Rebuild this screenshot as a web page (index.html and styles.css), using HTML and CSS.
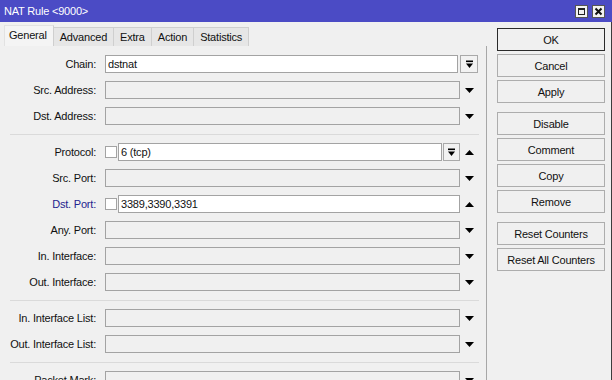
FILE: index.html
```html
<!DOCTYPE html>
<html>
<head>
  <meta charset="utf-8">
  <title>NAT Rule &lt;9000&gt;</title>
  <link rel="stylesheet" href="styles.css">
</head>
<body>

<div class="window">
  <div class="titlebar">
    <span class="title">NAT Rule &lt;9000&gt;</span>
    <div class="wbtns">
      <span class="wbtn">
        <svg width="13" height="13" viewBox="0 0 13 13">
          <rect x="0.5" y="0.5" width="12" height="12" fill="#f2f2f2" stroke="#555"/>
          <rect x="3.5" y="3.5" width="6" height="6" fill="none" stroke="#222"/>
          <rect x="3" y="3" width="7" height="2" fill="#222"/>
        </svg>
      </span>
      <span class="wbtn">
        <svg width="13" height="13" viewBox="0 0 13 13">
          <rect x="0.5" y="0.5" width="12" height="12" fill="#f2f2f2" stroke="#555"/>
          <path d="M3.5 3.5 L9.5 9.5 M9.5 3.5 L3.5 9.5" stroke="#111" stroke-width="2"/>
        </svg>
      </span>
    </div>
  </div>

  <div class="body">
    <div class="main">
      <div class="tabs">
        <span class="tab active">General</span>
        <span class="tab">Advanced</span>
        <span class="tab">Extra</span>
        <span class="tab">Action</span>
        <span class="tab">Statistics</span>
      </div>

      <div class="panel">
        <!-- section 1 -->
        <div class="section">
          <div class="row">
            <span class="label">Chain:</span>
            <div class="field"><span class="box on short">dstnat</span></div>
            <span class="dd"><svg width="9" height="9" viewBox="0 0 9 9"><rect x="1" y="0.5" width="7" height="1.6" fill="#000"/><polygon points="1,3.5 8,3.5 4.5,8" fill="#000"/></svg></span>
          </div>
          <div class="row">
            <span class="label">Src. Address:</span>
            <div class="field"><span class="box"></span></div>
            <span class="arrow"><svg width="9" height="5" viewBox="0 0 9 5"><polygon points="0,0 9,0 4.5,5" fill="#000"/></svg></span>
          </div>
          <div class="row">
            <span class="label">Dst. Address:</span>
            <div class="field"><span class="box"></span></div>
            <span class="arrow"><svg width="9" height="5" viewBox="0 0 9 5"><polygon points="0,0 9,0 4.5,5" fill="#000"/></svg></span>
          </div>
        </div>

        <div class="sep"></div>

        <!-- section 2 -->
        <div class="section">
          <div class="row">
            <span class="label">Protocol:</span>
            <div class="field">
              <span class="check"></span>
              <span class="box on">6 (tcp)</span>
              <span class="dd inline"><svg width="9" height="9" viewBox="0 0 9 9"><rect x="1" y="0.5" width="7" height="1.6" fill="#000"/><polygon points="1,3.5 8,3.5 4.5,8" fill="#000"/></svg></span>
            </div>
            <span class="arrow"><svg width="9" height="5" viewBox="0 0 9 5"><polygon points="0,5 9,5 4.5,0" fill="#000"/></svg></span>
          </div>
          <div class="row">
            <span class="label">Src. Port:</span>
            <div class="field"><span class="box"></span></div>
            <span class="arrow"><svg width="9" height="5" viewBox="0 0 9 5"><polygon points="0,0 9,0 4.5,5" fill="#000"/></svg></span>
          </div>
          <div class="row">
            <span class="label blue">Dst. Port:</span>
            <div class="field">
              <span class="check"></span>
              <span class="box on">3389,3390,3391</span>
            </div>
            <span class="arrow"><svg width="9" height="5" viewBox="0 0 9 5"><polygon points="0,5 9,5 4.5,0" fill="#000"/></svg></span>
          </div>
          <div class="row">
            <span class="label">Any. Port:</span>
            <div class="field"><span class="box"></span></div>
            <span class="arrow"><svg width="9" height="5" viewBox="0 0 9 5"><polygon points="0,0 9,0 4.5,5" fill="#000"/></svg></span>
          </div>
          <div class="row">
            <span class="label">In. Interface:</span>
            <div class="field"><span class="box"></span></div>
            <span class="arrow"><svg width="9" height="5" viewBox="0 0 9 5"><polygon points="0,0 9,0 4.5,5" fill="#000"/></svg></span>
          </div>
          <div class="row">
            <span class="label">Out. Interface:</span>
            <div class="field"><span class="box"></span></div>
            <span class="arrow"><svg width="9" height="5" viewBox="0 0 9 5"><polygon points="0,0 9,0 4.5,5" fill="#000"/></svg></span>
          </div>
        </div>

        <div class="sep"></div>

        <!-- section 3 -->
        <div class="section">
          <div class="row">
            <span class="label">In. Interface List:</span>
            <div class="field"><span class="box"></span></div>
            <span class="arrow"><svg width="9" height="5" viewBox="0 0 9 5"><polygon points="0,0 9,0 4.5,5" fill="#000"/></svg></span>
          </div>
          <div class="row">
            <span class="label">Out. Interface List:</span>
            <div class="field"><span class="box"></span></div>
            <span class="arrow"><svg width="9" height="5" viewBox="0 0 9 5"><polygon points="0,0 9,0 4.5,5" fill="#000"/></svg></span>
          </div>
        </div>

        <div class="sep"></div>

        <!-- section 4 -->
        <div class="section">
          <div class="row">
            <span class="label">Packet Mark:</span>
            <div class="field"><span class="box"></span></div>
            <span class="arrow"><svg width="9" height="5" viewBox="0 0 9 5"><polygon points="0,0 9,0 4.5,5" fill="#000"/></svg></span>
          </div>
        </div>
      </div>
    </div>

    <div class="side">
      <div class="group">
        <button class="btn default">OK</button>
        <button class="btn">Cancel</button>
        <button class="btn">Apply</button>
      </div>
      <div class="group">
        <button class="btn">Disable</button>
        <button class="btn">Comment</button>
        <button class="btn">Copy</button>
        <button class="btn">Remove</button>
      </div>
      <div class="group">
        <button class="btn">Reset Counters</button>
        <button class="btn">Reset All Counters</button>
      </div>
    </div>
  </div>
</div>

</body>
</html>
```

FILE: styles.css
```css
body {
  margin: 0;
  font-family: "Liberation Sans", Arial, sans-serif;
  font-size: 11px;
  letter-spacing: -0.2px;
  color: #111;
  background: #f0f0f0;
}
.window {
  width: 612px;
  height: 380px;
  overflow: hidden;
  background: #f0f0f0;
}
.titlebar {
  height: 22px;
  background: #4b4bc5;
  display: flex;
  align-items: center;
  justify-content: space-between;
  padding: 0 7px 0 4px;
  box-sizing: border-box;
}
.title {
  color: #fff;
  font-size: 11px;
}
.wbtns {
  display: flex;
  gap: 4px;
}
.wbtn {
  display: block;
  width: 13px;
  height: 13px;
}
.wbtn svg {
  display: block;
}

.body {
  display: flex;
  height: 358px;
  border-right: 1px solid #3c3c3c;
  width: 611px;
}
.main {
  width: 487px;
  display: flex;
  flex-direction: column;
  min-height: 0;
}
.tabs {
  display: flex;
  flex-shrink: 0;
  align-items: flex-end;
  height: 24px;
  padding-left: 4px;
}
.tab {
  height: 19px;
  line-height: 18px;
  padding: 0 6px;
  box-sizing: border-box;
  border: 1px solid #cfcfcf;
  border-bottom: none;
  border-left: none;
  background: #e6e6e6;
}
.tab.active {
  height: 21px;
  line-height: 19px;
  padding: 0 6px 0 4px;
  background: #f4f4f4;
  border-left: 1px solid #e2e2e2;
  border-top-color: #e2e2e2;
}
.panel {
  flex: 1;
  min-height: 0;
  overflow: hidden;
  border-right: 1px solid #a7a7a7;
  padding-top: 9px;
}
.section {
  display: flex;
  flex-direction: column;
  gap: 8px;
}
.row {
  display: flex;
  flex-shrink: 0;
  align-items: center;
  height: 18px;
}
.label {
  width: 96px;
  margin-right: 9px;
  text-align: right;
  white-space: nowrap;
}
.label.blue {
  color: #23238f;
}
.field {
  width: 355px;
  height: 18px;
  display: flex;
  align-items: center;
}
.box {
  flex: 1;
  height: 18px;
  box-sizing: border-box;
  border: 1px solid #a3a3a3;
  background: #f0f0f0;
  padding-left: 2px;
  line-height: 16px;
  color: #111;
}
.box.on {
  background: #fff;
}
.box.short {
  margin-right: 2px;
}
.check {
  width: 12px;
  height: 12px;
  box-sizing: border-box;
  border: 1px solid #a3a3a3;
  background: #fff;
  margin-right: 1px;
}
.dd {
  width: 18px;
  height: 18px;
  box-sizing: border-box;
  border: 1px solid #a9a9a9;
  background: #f2f2f2;
  display: flex;
  align-items: center;
  justify-content: center;
}
.dd.inline {
  width: 17px;
  margin-left: 1px;
}
.arrow {
  width: 18px;
  display: flex;
  justify-content: center;
}
.arrow svg,
.dd svg {
  display: block;
}
.sep {
  flex-shrink: 0;
  margin: 9px 0 8px 10px;
  width: 469px;
  border-top: 1px solid #dadada;
}

.side {
  padding: 6px 0 0 10px;
  display: flex;
  flex-direction: column;
  gap: 9px;
}
.group {
  display: flex;
  flex-direction: column;
  gap: 3px;
}
.btn {
  width: 108px;
  height: 23px;
  border: 1px solid #adadad;
  background: #f0f0f0;
  font-family: "Liberation Sans", Arial, sans-serif;
  font-size: 11px;
  letter-spacing: -0.2px;
  color: #111;
  padding: 0;
}
.btn.default {
  border-color: #2a2a2a;
}
```
